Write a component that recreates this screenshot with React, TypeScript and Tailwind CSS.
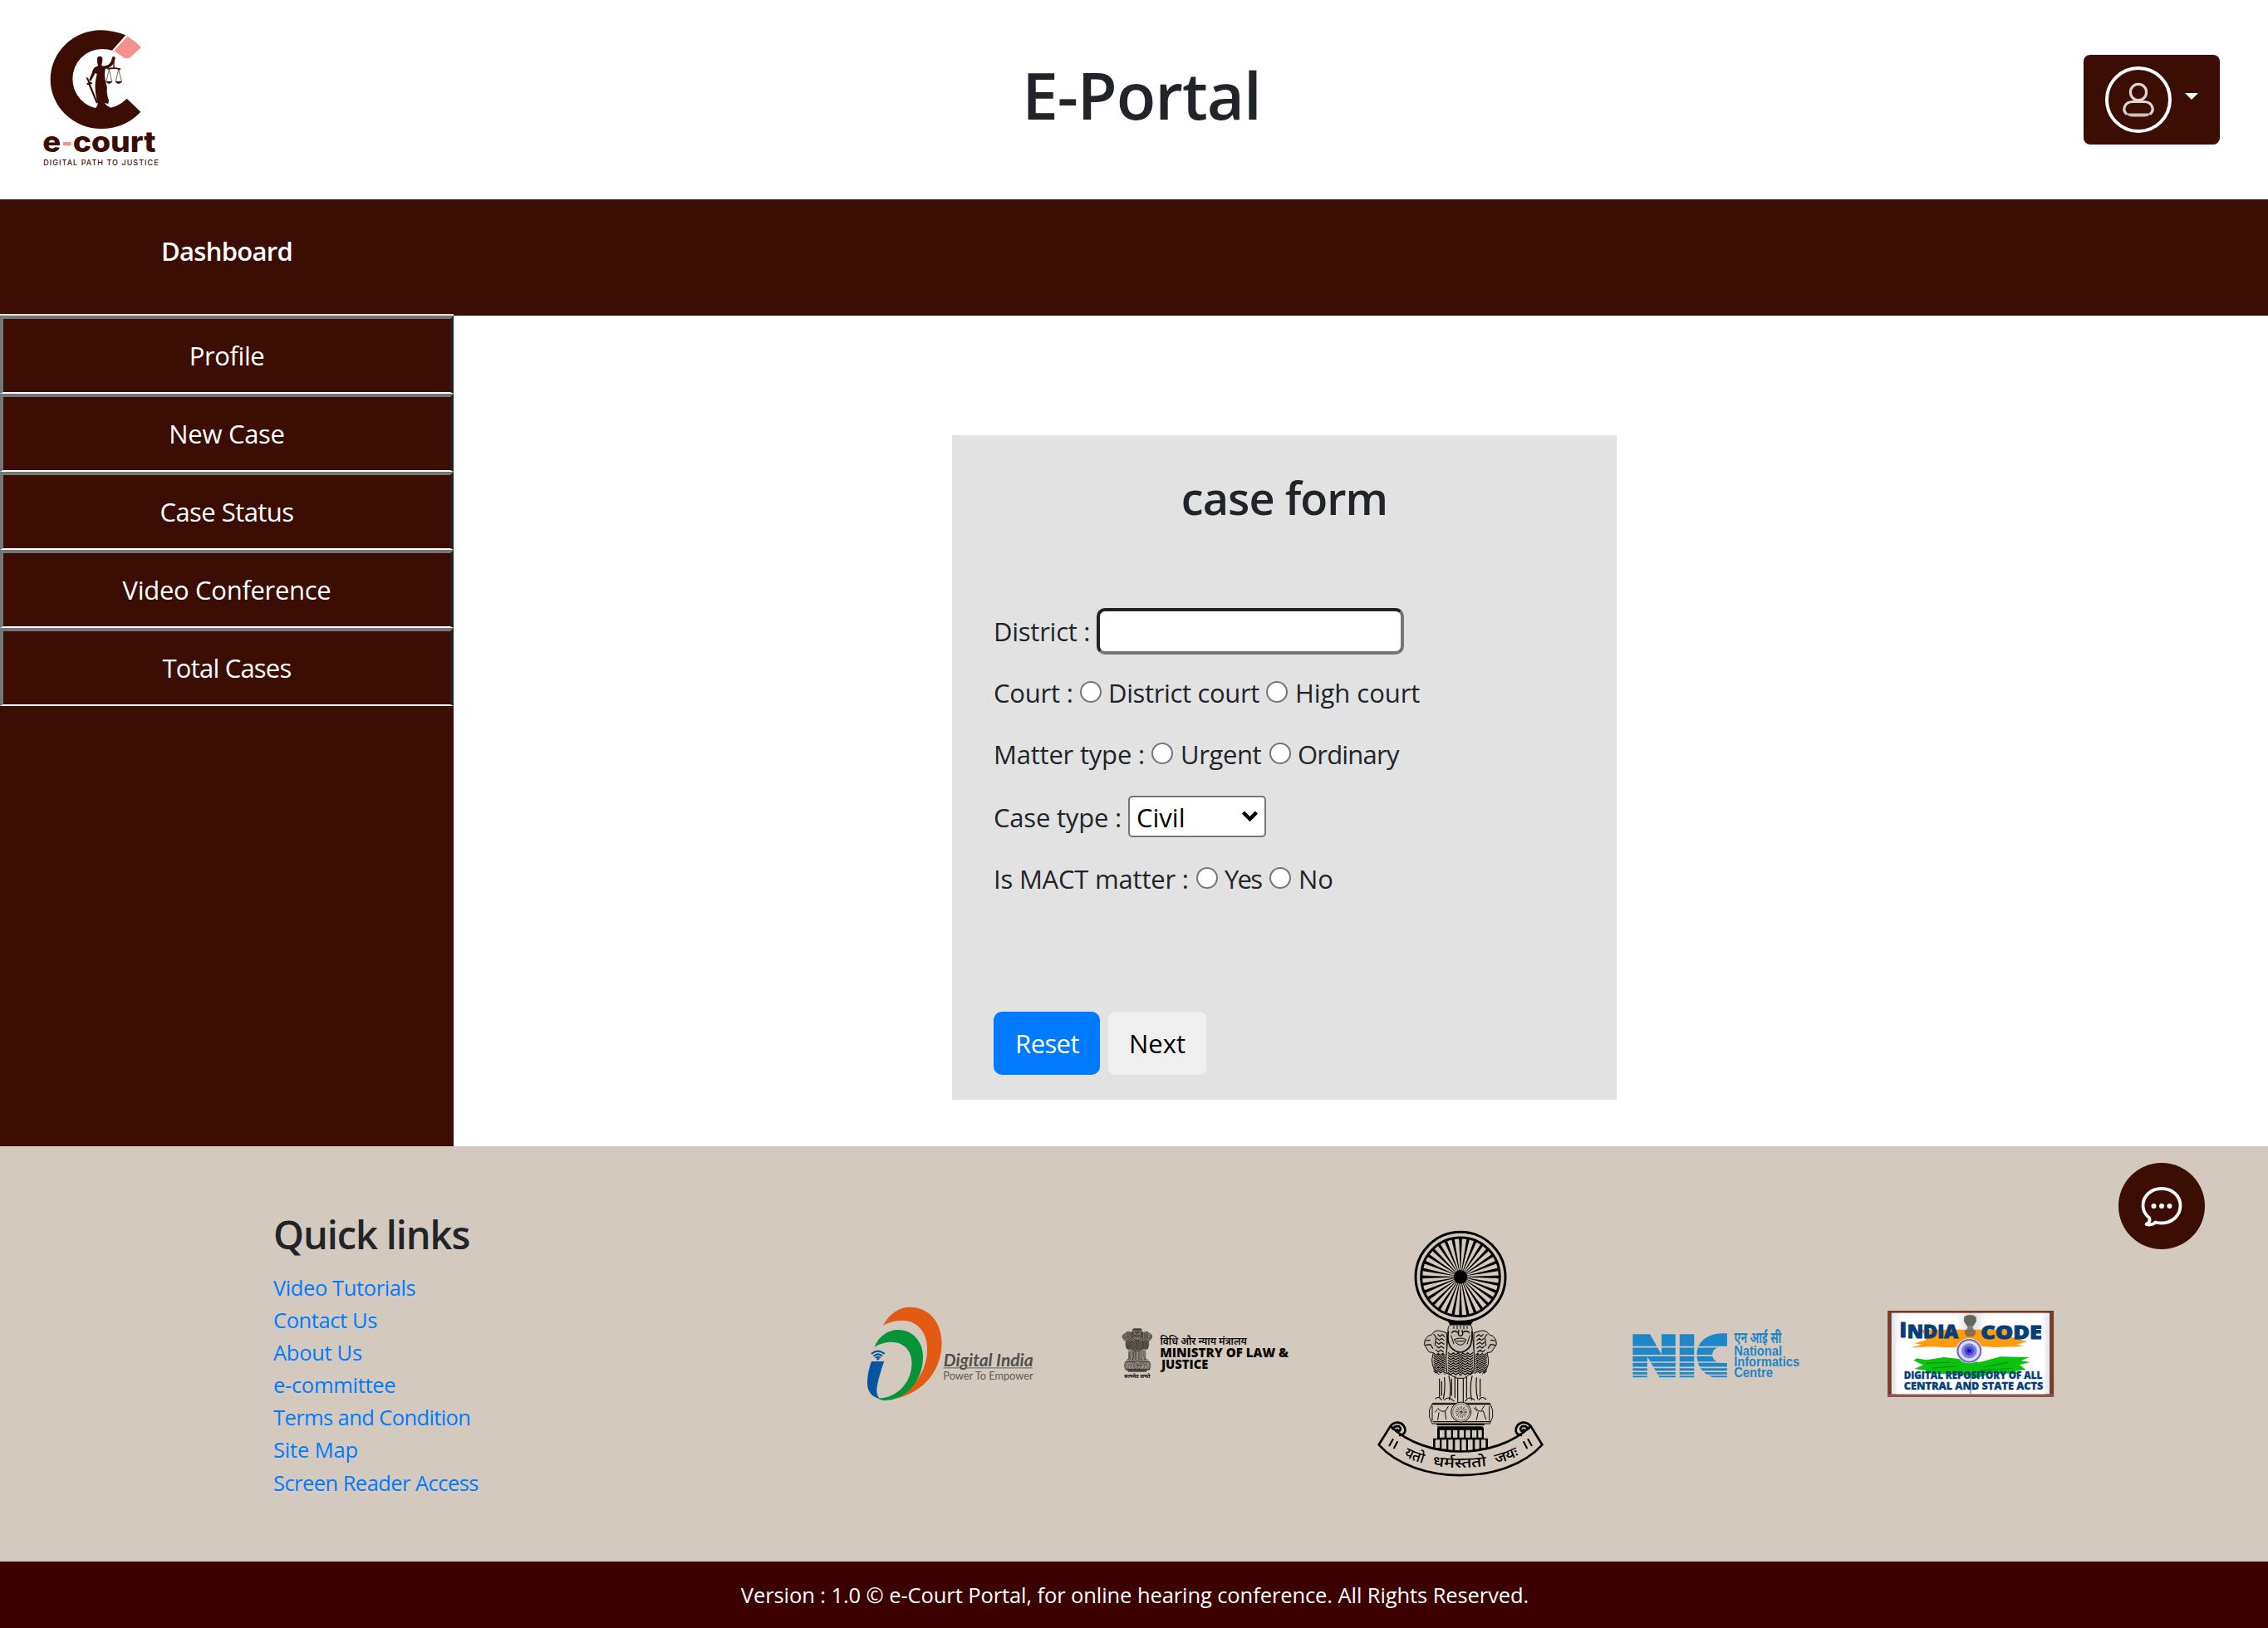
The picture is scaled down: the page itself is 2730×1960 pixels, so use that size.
import React from 'react';

const sidebarItems = [
  { label: 'Profile', tracking: 'tracking-[-0.4px]' },
  { label: 'New Case', tracking: 'tracking-[-0.3px]' },
  { label: 'Case Status', tracking: 'tracking-[-0.55px]' },
  { label: 'Video Conference', tracking: 'tracking-[-0.3px]' },
  { label: 'Total Cases', tracking: 'tracking-[-0.8px]' },
];

const quickLinks = [
  { label: 'Video Tutorials', tracking: 'tracking-[-0.4px]' },
  { label: 'Contact Us', tracking: 'tracking-[-0.4px]' },
  { label: 'About Us', tracking: 'tracking-[-0.3px]' },
  { label: 'e-committee', tracking: 'tracking-[-0.3px]' },
  { label: 'Terms and Condition', tracking: 'tracking-[-0.6px]' },
  { label: 'Site Map', tracking: 'tracking-[-0.15px]' },
  { label: 'Screen Reader Access', tracking: 'tracking-[-0.55px]' },
];

function CourtLogo() {
  return (
    <svg className="h-[210px] w-[200px]" viewBox="0 0 600 630">
      <path
        fill="#3c0d03"
        d="M394 97Q350 80 305 79A183 178 0 0 0 305 435Q390 435 448 374L398 326Q365 361 308 363A106 108 0 0 1 308 147Q330 147 345 152Z"
      />
      <path fill="#f4918d" d="M400 101Q428 118 450 141L412 176Q400 184 386 178Q370 166 351 154Z" />
      <g fill="#3c0d03">
        <path d="M291 180Q293 173 301 173Q310 174 310 184Q310 196 307 203L308 208Q322 210 332 203Q340 197 343 187L345 177Q350 171 355 176Q359 181 354 187Q352 200 345 206Q334 217 320 219L318 240Q319 255 322 268Q329 285 326 300Q327 318 333 332L331 345L318 342Q322 350 336 357L345 364L280 366Q292 354 293 345Q281 300 284 270Q287 250 290 237L284 234Q276 250 268 262L261 262Q266 246 273 232Q276 214 288 211L294 207Q290 195 291 180Z" />
        <path d="M250 249L258 251L263 264L274 270L272 274L266 273L293 340L288 344L260 277L253 275L254 271L259 268Z" />
      </g>
      <g fill="none" stroke="#3c0d03" strokeWidth="3">
        <path strokeWidth="4" d="M351 184V218" />
        <path strokeWidth="5" d="M328 219Q351 213 375 220" />
        <path strokeWidth="2" d="M334 220L324 264M334 220L344 264M368 220L358 264M368 220L379 264" />
        <path fill="#3c0d03" d="M323 265H345Q334 277 323 265ZM357 265H380Q369 277 357 265Z" />
      </g>
      <g fontFamily="Inter, 'Liberation Sans', sans-serif" fill="#3c0d03">
        <text x="94" y="520" fontSize="106" fontWeight="800" textLength="66" lengthAdjust="spacingAndGlyphs">e</text>
        <text x="203" y="520" fontSize="106" fontWeight="800" textLength="300" lengthAdjust="spacingAndGlyphs">court</text>
        <text x="97" y="568" fontSize="27" fontWeight="500" textLength="415">DIGITAL PATH TO JUSTICE</text>
      </g>
      <rect x="167" y="483" width="30" height="13" fill="#f4918d" />
    </svg>
  );
}

function UserMenu() {
  return (
    <button className="flex h-[108px] w-[164px] items-center rounded-lg bg-[#3c0d03] pl-[26px]">
      <span className="flex h-20 w-20 items-center justify-center rounded-full border-4 border-white">
        <svg className="h-[44px] w-[40px]" viewBox="0 0 40 44" fill="none" stroke="#ded3d1" strokeWidth="3.200">
          <circle cx="20" cy="13" r="9.6" />
          <path d="M6 39.5C-.5 34 4 24.5 13 24.5H27C36 24.5 40.500 34 34 39.500" />
          <path stroke="none" fill="#cdbfbd" d="M4.500 38.500H35.500Q32 42.500 27 42.500H13Q8 42.500 4.500 38.500Z" />
        </svg>
      </span>
      <span className="mb-2 ml-4 border-x-8 border-t-8 border-x-transparent border-t-white" />
    </button>
  );
}

const scales = Array.from({ length: 9 }, (_, i) => i);

/* Lion capital: three lions standing on a round abacus */
function LionCapital({ body = '#c6bbb0', base = '#d4c9be' }: { body?: string; base?: string }) {
  return (
    <g stroke="#0d0b0a" fill="none" strokeWidth="3" strokeLinejoin="round" strokeLinecap="round">
      <g fill={body}>
        <path d="M250 440Q262 421 282 427L304 434V580L286 592Q250 570 251 530L256 506L240 503L223 476Q222 458 236 446Z" />
        <path d="M458 440Q446 421 426 427L402 434V580L420 592Q458 570 455 530L450 506L466 503L484 476Q486 458 472 446Z" />
        <path fill={base} stroke="none" d="M272 585L281 596Q284 640 276 662L260 670L262 684H447L448 672L430 662Q422 640 425 596L434 580Z" />
        <path d="M309 430Q306 408 322 402H386Q398 408 396 432L400 470Q406 530 402 572L368 598H342L305 580Q298 530 306 480Z" />
      </g>
      <path strokeWidth="5" d="M318 404H390M310 430Q305 460 316 482Q334 504 354 504Q376 502 390 480Q398 455 396 430" />
      <path strokeWidth="4" d="M322 434Q333 421 345 434M362 434Q374 421 386 434M348 424L346 440Q354 450 362 440L360 424" />
      <path strokeWidth="3" d="M332 458Q354 448 374 458Q370 476 353 478Q336 474 332 458ZM340 464H368M320 444L330 474M388 444L378 474M330 410V418M342 408V420M354 408V418M366 408V420M378 410V418" />
      <g strokeWidth="3.500">
        <path d="M230 462L244 460M228 478L246 476L254 490M258 440L266 450L262 480M478 462L464 460M480 478L462 476L454 490M450 440L442 450L446 480" />
        {scales.map((i) => (
          <g key={i}>
            <path d={`M310 ${506 + i * 9}l9 7l9 -7l9 7l9 -7l8 10l8 -10l9 7l9 -7l9 7l9 -7`} />
            <path d={`M258 ${508 + i * 8}l8 7l8 -7l8 7l8 -7l8 7`} />
            <path d={`M408 ${515 + i * 8}l8 -7l8 7l8 -7l8 7l8 -7`} />
          </g>
        ))}
        <path d="M272 440l8 7l8 -7l8 7M270 454l8 7l8 -7l8 7M268 468l8 7l8 -7l10 7M268 482l8 7l8 -7l10 7M266 496l8 7l8 -7l10 7M436 440l-8 7l-8 -7l-8 7M438 454l-8 7l-8 -7l-8 7M440 468l-8 7l-8 -7l-10 7M440 482l-8 7l-8 -7l-10 7M442 496l-8 7l-8 -7l-10 7" />
      </g>
      <path
        strokeWidth="3.500"
        d="M278 600V664M296 596Q300 640 292 672M312 590Q322 630 314 676M334 592V668M344 600V682M364 600V682M376 592V668M396 590Q386 630 394 676M412 596Q408 640 416 672M425 600V664M264 672Q274 660 286 676M296 676Q310 660 330 680M372 680Q384 660 404 676M420 676Q432 660 446 674M286 610V660M322 600V660"
      />
      <path fill={base} d="M255 688H460L470 712V738L460 762H252L242 738V712Z" />
      <path strokeWidth="4" strokeDasharray="4 3" d="M252 692H462M256 755H460M272 774H434" />
      <path strokeWidth="3" d="M272 706Q282 722 300 716L310 700M272 748L276 722M302 746L298 718M408 702Q416 722 436 716L446 746M412 748L418 720M430 712L440 698M252 700V750M458 700V750M402 706L414 716M262 720L270 712" />
      <circle cx="356" cy="720" r="36" fill={base} strokeWidth="3" />
      <circle cx="356" cy="720" r="30" strokeWidth="1.500" />
      <circle cx="356" cy="720" r="15" strokeWidth="13" strokeLinecap="butt" strokeDasharray="1.500 4.400" />
      <circle cx="356" cy="720" r="4" strokeWidth="3" />
      <path strokeWidth="6" d="M270 765H438" />
      <path strokeWidth="4" d="M276 775H432" />
    </g>
  );
}

const spokes = Array.from({ length: 32 }, (_, i) => (i * 360) / 32);

function SupremeCourtEmblem() {
  return (
    <svg className="h-[300px] w-[200px] overflow-visible" viewBox="54 60 600 900">
      <circle cx="354" cy="232" r="162" fill="none" stroke="#000" strokeWidth="9" />
      <circle cx="354" cy="232" r="142" fill="none" stroke="#000" strokeWidth="9" />
      {spokes.map((a) => (
        <path key={a} d="M353 208L348.500 90H359.500L355 208Z" transform={`rotate(${a} 354 232)`} />
      ))}
      <circle cx="354" cy="232" r="25" />
      <path d="M304 386Q354 402 404 386L392 404H316Z" />
      <LionCapital />
      <g fill="#d4c9be" stroke="#000" strokeWidth="6">
        <path fill="#000" stroke="none" d="M270 776H438V815H453V870H255V815H270Z" />
        <path
          stroke="none"
          d="M279 785h17v27h-17zM304 785h16v27h-16zM327 785h16v27h-16zM350 785h16v27h-16zM373 785h16v27h-16zM396 785h16v27h-16zM418 785h13v27h-13zM263 820h16v30h-16zM286 820h17v34h-17zM310 820h16v38h-16zM334 820h17v40h-17zM358 820h16v40h-16zM381 820h17v38h-17zM406 820h16v34h-16zM429 820h16v30h-16z"
        />
        <path strokeWidth="8" d="M101 771L59 838C190 985 518 985 649 838L608 771C480 893 228 893 101 771Z" />
        <path fill="none" strokeWidth="8" d="M99 776Q108 756 130 758Q156 764 154 790Q148 806 132 803M108 784Q118 766 132 772Q142 780 134 788Q126 788 124 780" />
        <path fill="none" strokeWidth="8" d="M609 776Q600 756 578 758Q552 764 554 790Q560 806 576 803M600 784Q590 766 576 772Q566 780 574 788Q582 788 584 780" />
      </g>
      <path d="M111 817L96 843M127 826L113 852M597 817L612 843M581 826L595 852" stroke="#000" strokeWidth="6" />
      <path id="motto-left" fill="none" d="M149 879Q186 898 226 907" />
      <path id="motto-middle" fill="none" d="M253 914Q354 928 454 914" />
      <path id="motto-right" fill="none" d="M483 907Q526 897 570 874" />
      <g fontFamily="'Noto Sans Devanagari', 'Noto Sans', 'Lohit Devanagari', FreeSans, sans-serif" fontSize="52" fontWeight="500">
        <text>
          <textPath href="#motto-left" textLength="74" lengthAdjust="spacingAndGlyphs">यतो</textPath>
        </text>
        <text>
          <textPath href="#motto-middle" textLength="196" lengthAdjust="spacingAndGlyphs">धर्मस्ततो</textPath>
        </text>
        <text>
          <textPath href="#motto-right" textLength="88" lengthAdjust="spacingAndGlyphs">जयः</textPath>
        </text>
      </g>
    </svg>
  );
}

function DigitalIndiaLogo() {
  return (
    <svg className="h-[116px] w-[200px] overflow-visible" viewBox="67.2 96 560 348" preserveAspectRatio="none">
      <path fill="#e35b12" d="M120 168C140 125 175 101 210 101C275 101 318 155 318 232C318 325 260 408 165 431C225 395 270 330 269 250C268 190 235 150 185 149C160 150 140 155 120 168Z" />
      <path fill="#069438" d="M91 246C105 205 140 182 172 183C220 184 255 225 255 280C255 370 195 438 125 438Q108 437 102 430C165 432 218 375 217 300C215 255 190 228 148 227C125 228 105 235 91 246Z" />
      <path fill="#0455a2" d="M81 297H124C108 345 98 385 99 408Q102 428 111 432C82 428 66 405 67 372Q68 335 81 297Z" />
      <g fill="none" stroke="#0455a2" strokeWidth="6">
        <path d="M81 270Q103 250 125 270M88 278Q103 264 118 278M95 285Q103 277 111 285" />
      </g>
      <circle cx="103" cy="289" r="4" fill="#0455a2" />
      <g fontFamily="Lato, 'Open Sans', sans-serif" fill="#4f4f4d">
        <text x="324" y="315" fontSize="61" fontWeight="700" fontStyle="italic" textLength="302" lengthAdjust="spacingAndGlyphs">Digital India</text>
        <text x="323" y="363" fontSize="39" fill="#5b5a57" textLength="303" lengthAdjust="spacingAndGlyphs">Power To Empower</text>
      </g>
      <path d="M323 320.500H376M398 320.500H624" stroke="#77736e" strokeWidth="4" />
    </svg>
  );
}

function MinistryLogo() {
  return (
    <svg className="h-16 w-[200px] overflow-visible" viewBox="929.6 174 560 192" preserveAspectRatio="none">
      <g transform="translate(844 14) scale(.384 .412)">
        <LionCapital body="#80786f" base="#9a9188" />
      </g>
      <g fontFamily="'Open Sans', 'Noto Sans Devanagari', 'Lohit Devanagari', FreeSans, sans-serif" fill="#0a0908">
        <text x="936" y="358" fontSize="17" fontWeight="700" textLength="87" lengthAdjust="spacingAndGlyphs">सत्यमेव जयते</text>
        <text x="1057" y="236" fontSize="38" fontWeight="600" textLength="292" lengthAdjust="spacingAndGlyphs">विधि और न्याय मंत्रालय</text>
        <text x="1056" y="283" fontSize="46" fontWeight="800" textLength="434" lengthAdjust="spacingAndGlyphs">MINISTRY OF LAW &amp;</text>
        <text x="1061" y="325" fontSize="46" fontWeight="800" textLength="158" lengthAdjust="spacingAndGlyphs">JUSTICE</text>
      </g>
    </svg>
  );
}

function NicLogo() {
  return (
    <svg className="h-[60px] w-[200px] overflow-visible" viewBox="72 120 560 180" preserveAspectRatio="none">
      <g fill="#1f86c8">
        <path d="M73 139H131L170 212V139H217V295H163L122 220V295H73Z" />
        <path d="M231 139H280V295H231Z" />
        <path d="M391 136H375C320 137 289 170 289 213C289 260 315 285 345 295H391V243H372C350 240 341 226 341 212C343 195 355 186 373 184H391Z" />
      </g>
      <path stroke="#d4c9be" strokeWidth="5" d="M70 185H393M70 215.500H393M70 240H393M70 259H393M70 273.500H393M70 286.500H393" />
      <g fontFamily="'Liberation Sans', 'Noto Sans Devanagari', FreeSans, sans-serif" fontWeight="700" fill="#1f86c8">
        <text x="415" y="172" fontSize="56" textLength="159" lengthAdjust="spacingAndGlyphs">एन आई सी</text>
        <text x="414" y="215" fontSize="47" textLength="162" lengthAdjust="spacingAndGlyphs">National</text>
        <text x="414" y="254" fontSize="47" textLength="221" lengthAdjust="spacingAndGlyphs">Informatics</text>
        <text x="414" y="293" fontSize="47" textLength="131" lengthAdjust="spacingAndGlyphs">Centre</text>
      </g>
    </svg>
  );
}

function IndiaCodeLogo() {
  return (
    <svg className="h-[104px] w-[200px] overflow-visible" viewBox="929.6 54 560 312" preserveAspectRatio="none">
      <defs>
        <linearGradient id="page">
          <stop offset="0" stopColor="#dfe4ec" />
          <stop offset=".07" stopColor="#fff" />
          <stop offset=".4" stopColor="#fff" />
          <stop offset=".49" stopColor="#dddfe4" />
          <stop offset=".51" stopColor="#d8dbe0" />
          <stop offset=".6" stopColor="#fff" />
          <stop offset=".94" stopColor="#fff" />
          <stop offset="1" stopColor="#dfe4ec" />
        </linearGradient>
        <linearGradient id="page-fade" x2="0" y2="1">
          <stop offset=".15" stopColor="#fff" stopOpacity="0" />
          <stop offset=".45" stopColor="#fff" />
        </linearGradient>
      </defs>
      <rect x="930" y="54" width="560" height="312" fill="#783a28" />
      <rect x="930" y="356" width="560" height="10" fill="#8b584c" />
      <rect x="943" y="62" width="533" height="293" fill="url(#page)" />
      <rect x="960" y="62" width="500" height="293" fill="url(#page-fade)" />
      <path fill="#ff9c0c" d="M1045 122H1330L1350 150L1400 165L1365 176L1390 183L1290 186L1240 182L1140 187L1070 184L1008 188L1045 176L1020 172L1060 160Z" />
      <path fill="#0bc30d" d="M1028 226L1060 232L1120 222L1170 228L1240 240L1310 220L1408 222L1380 234L1410 240L1375 250L1395 266L1360 272L1370 282L1280 280L1230 298L1180 284L1050 280L1062 270L1020 264L1050 250L1018 234Z" />
      <path stroke="#078a0c" strokeWidth="3" fill="none" d="M1060 244L1140 240M1080 262L1160 254M1250 258L1340 240M1240 270L1350 262" />
      <g fill="#66645f">
        <path d="M1188 76Q1208 62 1228 76L1229 92L1218 110H1198L1187 92Z" />
        <path d="M1200 110H1216L1220 124H1226V138L1218 148H1198L1190 138V124H1196Z" fillOpacity=".8" />
      </g>
      <ellipse cx="1205" cy="199" rx="44" ry="45" fill="#fff" />
      <ellipse cx="1205" cy="199" rx="39" ry="40" fill="#dcdcf8" stroke="#6d68c8" strokeWidth="6" />
      <ellipse cx="1205" cy="199" rx="26" ry="27" fill="#7f7de0" />
      <ellipse cx="1205" cy="199" rx="16" ry="17" fill="#4b48d2" />
      <ellipse cx="1205" cy="199" rx="7" ry="7" fill="#120fc0" />
      <path d="M1209 290V355" stroke="#9aa5ab" strokeWidth="5" />
      <g fontFamily="'Open Sans', sans-serif" fontWeight="800" fill="#083f78" stroke="#083f78" strokeWidth="3">
        <text x="970" y="151" fontSize="73" textLength="24" lengthAdjust="spacingAndGlyphs">I</text>
        <text x="996" y="153" fontSize="68" textLength="172" lengthAdjust="spacingAndGlyphs">NDIA</text>
        <text x="1244" y="155" fontSize="71" textLength="206" lengthAdjust="spacingAndGlyphs">CODE</text>
        <g strokeWidth="1">
          <text x="985" y="299" fontSize="37" textLength="466" lengthAdjust="spacingAndGlyphs">DIGITAL REPOSITORY OF ALL</text>
          <text x="985" y="339" fontSize="37" textLength="469" lengthAdjust="spacingAndGlyphs">CENTRAL AND STATE ACTS</text>
        </g>
      </g>
    </svg>
  );
}

function Radio({ name }: { name: string }) {
  return (
    <input
      type="radio"
      name={name}
      className="mb-0.5 h-[26px] w-[26px] shrink-0 appearance-none rounded-full border-2 border-[#767676] bg-white"
    />
  );
}

function CaseForm() {
  return (
    <form className="mt-36 ml-[600px] flex h-[800px] w-[800px] flex-col bg-[#e2e2e2] pt-[42px] pl-[50px] text-[31px] whitespace-nowrap">
      <h2 className="mr-[50px] text-center text-[54px] leading-[66px] font-[580] tracking-[-0.95px]">case form</h2>
      <div className="mt-[100px] flex h-14 items-center">
        <label className="w-[124px] tracking-[-0.25px]">District :</label>
        <input className="h-14 w-[370px] rounded-[10px] border-4 border-t-[#222] border-r-[#767676] border-b-[#767676] border-l-[#222] bg-white" />
      </div>
      <div className="mt-[22px] flex h-12 items-center">
        <span className="w-[104px] tracking-[-0.2px]">Court :</span>
        <Radio name="court" />
        <span className="ml-2 w-[190px] tracking-[-0.35px]">District court</span>
        <Radio name="court" />
        <span className="ml-[9px] tracking-[-0.05px]">High court</span>
      </div>
      <div className="mt-[26px] flex h-12 items-center">
        <span className="w-[190px] tracking-[-0.2px]">Matter type :</span>
        <Radio name="matter" />
        <span className="ml-[9px] w-[107px] tracking-[-0.4px]">Urgent</span>
        <Radio name="matter" />
        <span className="ml-2 tracking-[-0.8px]">Ordinary</span>
      </div>
      <div className="mt-[26px] flex h-[50px] items-center">
        <label className="w-[162px] pt-0.5 tracking-[-0.2px]">Case type :</label>
        <div className="relative h-[50px] w-[166px]">
          <select className="h-full w-full appearance-none rounded-[5px] border-2 border-[#767676] bg-white pt-px pl-2 text-black">
            <option>Civil</option>
            <option>Criminal</option>
          </select>
          <svg className="absolute top-[17px] right-[9px] h-[15px] w-[21px]" viewBox="0 0 21 15" fill="none" stroke="#000" strokeWidth="4.500">
            <path d="M2.500 3L10.500 11L18.500 3" />
          </svg>
        </div>
      </div>
      <div className="mt-[26px] flex h-12 items-center">
        <span className="w-[244px] tracking-[-0.2px]">Is MACT matter :</span>
        <Radio name="mact" />
        <span className="ml-2 w-[54px] tracking-[-1.8px]">Yes</span>
        <Radio name="mact" />
        <span className="ml-[9px]">No</span>
      </div>
      <div className="mt-[136px] flex gap-2.5">
        <button type="reset" className="h-[76px] w-32 rounded-[10px] bg-[#007bff] pl-px tracking-[-0.6px] text-white">
          Reset
        </button>
        <button type="button" className="h-[76px] w-[118px] rounded-lg bg-[#efefef] text-black">
          Next
        </button>
      </div>
    </form>
  );
}

export default function App() {
  return (
    <div className="relative flex h-[1960px] w-[2730px] flex-col overflow-hidden bg-white font-['Open_Sans',sans-serif] text-[#212529]">
      <header className="flex h-60 justify-between pt-2.5 pr-[58px] pl-5">
        <CourtLogo />
        <h1 className="mt-[54px] ml-5 text-[78px] leading-[100px] font-[580] tracking-[-1px]">E-Portal</h1>
        <div className="mt-14">
          <UserMenu />
        </div>
      </header>

      <div className="flex h-[140px] shrink-0 bg-[#3c0d03]">
        <div className="flex w-[546px] justify-center border-b-2 border-[#dfe3dd] pt-[38px]">
          <span className="h-12 text-[31px] leading-[48px] font-semibold tracking-[-0.7px] text-white">Dashboard</span>
        </div>
      </div>

      <div className="flex h-[1000px] shrink-0">
        <nav className="w-[546px] bg-[#3c0d03]">
          {sidebarItems.map((item) => (
            <a
              key={item.label}
              className={`flex h-[94px] items-center justify-center border-4 border-b-2 border-t-[#767676] border-r-[#222] border-b-white border-l-[#767676] text-[31px] text-white ${item.tracking}`}
            >
              {item.label}
            </a>
          ))}
        </nav>
        <main>
          <CaseForm />
        </main>
      </div>

      <footer className="flex h-[500px] shrink-0 bg-[#d4c9be] pl-[329px]">
        <section className="w-[715px] pt-[77px]">
          <h3 className="mb-4 text-[47px] leading-[58px] font-[580] tracking-[-1.1px]">Quick links</h3>
          <ul className="text-[25.5px] leading-[39.1px] text-[#007bff]">
            {quickLinks.map((link) => (
              <li key={link.label}>
                <a className={link.tracking}>{link.label}</a>
              </li>
            ))}
          </ul>
        </section>
        <section className="flex items-center gap-[107px]">
          <DigitalIndiaLogo />
          <MinistryLogo />
          <SupremeCourtEmblem />
          <NicLogo />
          <IndiaCodeLogo />
        </section>
      </footer>

      <div className="flex h-20 shrink-0 items-center justify-center bg-[#3c0000] pl-0.5 text-[25.5px] tracking-[-0.09px] text-white">
        Version : 1.0 © e-Court Portal, for online hearing conference. All Rights Reserved.
      </div>

      <button className="absolute top-[1400px] left-[2550px] flex h-[104px] w-[104px] items-center justify-center rounded-full bg-[#3c0d03]">
        <svg className="h-[52px] w-[52px]" viewBox="0 0 52 52">
          <path
            fill="none"
            stroke="#fff"
            strokeWidth="3.800"
            strokeLinejoin="round"
            d="M7.500 48C11 46 12.500 43 11 40C6 36 3.500 31 3.500 25.500C3.500 13.500 13.500 5 26 5S48.500 13.500 48.500 25.500S38.500 46.500 26 46.500Q21 46.500 18.500 45.500C16 48.500 11 49 7.500 48Z"
          />
          <g fill="#fff">
            <circle cx="16.500" cy="26" r="3" />
            <circle cx="26" cy="26" r="3" />
            <circle cx="35.500" cy="26" r="3" />
          </g>
        </svg>
      </button>
    </div>
  );
}
